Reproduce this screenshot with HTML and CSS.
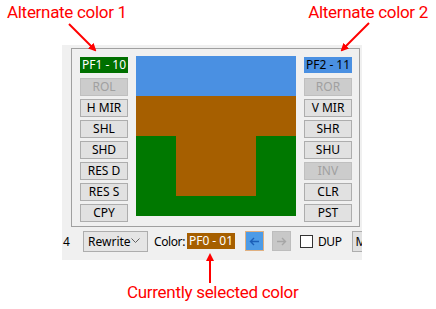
FILE: index.html
```html
<!DOCTYPE html>
<html lang="en">
<head>
  <meta charset="UTF-8">
  <title>Playfield colors</title>
  <link rel="stylesheet" href="styles.css">
</head>
<body>
  <div class="notes-top">
    <span class="note">Alternate color 1</span>
    <span class="note">Alternate color 2</span>
  </div>

  <div class="window">
    <div class="panel">
      <div class="col">
        <div class="swatch green">PF1 - 10</div>
        <div class="btn off">ROL</div>
        <div class="btn">H MIR</div>
        <div class="btn">SHL</div>
        <div class="btn">SHD</div>
        <div class="btn">RES D</div>
        <div class="btn">RES S</div>
        <div class="btn">CPY</div>
      </div>

      <div class="canvas">
        <div class="sky"></div>
        <div class="dirt"></div>
        <div class="grass"><div class="stem"></div></div>
      </div>

      <div class="col">
        <div class="swatch blue">PF2 - 11</div>
        <div class="btn off">ROR</div>
        <div class="btn">V MIR</div>
        <div class="btn">SHR</div>
        <div class="btn">SHU</div>
        <div class="btn off">INV</div>
        <div class="btn">CLR</div>
        <div class="btn">PST</div>
      </div>
    </div>

    <div class="toolbar">
      <span class="cut">4</span>
      <div class="select">
        Rewrite
        <svg width="9" height="6" viewBox="0 0 9 6"><path d="M0.5 0.5 L4.5 4.5 L8.5 0.5" fill="none" stroke="#606060" stroke-width="1"/></svg>
      </div>
      <span class="lbl">Color:</span>
      <div class="swatch brown">PF0 - 01</div>
      <div class="tool active">
        <svg width="11" height="9" viewBox="0 0 11 9"><path d="M10 4.5 H1.5 M5 1 L1.5 4.5 L5 8" fill="none" stroke="#1b5fb8" stroke-width="1.4"/></svg>
      </div>
      <div class="tool dim">
        <svg width="11" height="9" viewBox="0 0 11 9"><path d="M1 4.5 H9.5 M6 1 L9.5 4.5 L6 8" fill="none" stroke="#a6a6a6" stroke-width="1.4"/></svg>
      </div>
      <div class="check"></div>
      <span class="lbl">DUP</span>
      <div class="btn stub">M</div>
    </div>
  </div>

  <div class="notes-bottom">
    <span class="note">Currently selected color</span>
  </div>

  <svg class="arrows" width="436" height="309" viewBox="0 0 436 309">
    <defs>
      <marker id="head" markerWidth="8" markerHeight="8" refX="6" refY="4" orient="auto" markerUnits="userSpaceOnUse">
        <path d="M0 0 L8 4 L0 8 Z" fill="#ff0000"/>
      </marker>
    </defs>
    <line x1="69" y1="24" x2="95" y2="50" stroke="#ff0000" stroke-width="2" marker-end="url(#head)"/>
    <line x1="369" y1="23" x2="342" y2="50" stroke="#ff0000" stroke-width="2" marker-end="url(#head)"/>
    <line x1="210" y1="283" x2="210" y2="255" stroke="#ff0000" stroke-width="2" marker-end="url(#head)"/>
  </svg>
</body>
</html>
```

FILE: styles.css
```css
body {
  margin: 0;
  width: 436px;
  height: 309px;
  background: #ffffff;
  position: relative;
  overflow: hidden;
  font-family: "Noto Sans", sans-serif;
}

.note {
  color: #ff0000;
  font-family: Roboto, sans-serif;
  font-size: 17px;
  letter-spacing: -0.3px;
}

.notes-top {
  height: 45px;
  display: flex;
  justify-content: space-between;
  padding: 2px 8px 0 7px;
  box-sizing: border-box;
}

.notes-bottom {
  padding: 21px 0 0 127px;
}

.window {
  margin-left: 62px;
  width: 300px;
  height: 215px;
  background: #f0f0f0;
  padding-top: 3px;
  box-sizing: border-box;
  overflow: hidden;
}

.panel {
  margin: 0 2px 0 9px;
  height: 179px;
  border: 1px solid #a0a0a0;
  box-sizing: border-box;
  display: flex;
  padding: 7px 7px 0 8px;
  gap: 8px;
}

.col {
  width: 48px;
  display: flex;
  flex-direction: column;
  gap: 3px;
  padding-top: 1px;
}

.swatch {
  height: 16px;
  line-height: 16px;
  color: #ffffff;
  font-size: 12px;
  text-align: center;
  margin-bottom: 2px;
}

.green { background: #007000; }
.blue  { background: #4a90e2; color: #000000; }
.brown { background: #a65f00; width: 48px; margin: 0; }

.btn {
  height: 18px;
  line-height: 16px;
  box-sizing: border-box;
  border: 1px solid #adadad;
  background: #e1e1e1;
  font-size: 12px;
  text-align: center;
  color: #000000;
}

.btn.off {
  background: #cccccc;
  border-color: #bfbfbf;
  color: #a0a0a0;
}

.canvas {
  width: 160px;
  height: 160px;
  flex: none;
}

.sky   { height: 40px; background: #4a90e2; }
.dirt  { height: 40px; background: #a65f00; }
.grass { height: 80px; background: #007800; padding-left: 40px; box-sizing: border-box; }
.stem  { width: 80px; height: 60px; background: #a65f00; }

.toolbar {
  display: flex;
  align-items: center;
  height: 22px;
  margin-top: 3px;
  font-size: 12px;
}

.toolbar > * {
  flex: none;
}

.cut {
  margin-left: 1px;
  width: 20px;
}

.select {
  width: 65px;
  height: 21px;
  box-sizing: border-box;
  border: 1px solid #adadad;
  background: #e5e5e5;
  display: flex;
  align-items: center;
  justify-content: space-between;
  padding: 0 7px 0 4px;
}

.lbl {
  margin: 0 2px 0 6px;
  letter-spacing: -0.4px;
}

.tool {
  width: 19px;
  height: 20px;
  box-sizing: border-box;
  display: flex;
  align-items: center;
  justify-content: center;
}

.tool.active {
  margin-left: 10px;
  background: #4d9be6;
  border: 1px solid #e0b080;
}

.tool.dim {
  margin-left: 8px;
  background: #c8c8c8;
  border: 1px solid #bdbdbd;
}

.check {
  width: 13px;
  height: 13px;
  box-sizing: border-box;
  border: 1px solid #333333;
  background: #ffffff;
  margin-left: 9px;
}

.check + .lbl {
  margin-left: 5px;
}

.btn.stub {
  width: 40px;
  margin-left: 8px;
  height: 21px;
  line-height: 19px;
  text-align: left;
  padding-left: 3px;
}

.arrows {
  position: absolute;
  left: 0;
  top: 0;
  pointer-events: none;
}
```
